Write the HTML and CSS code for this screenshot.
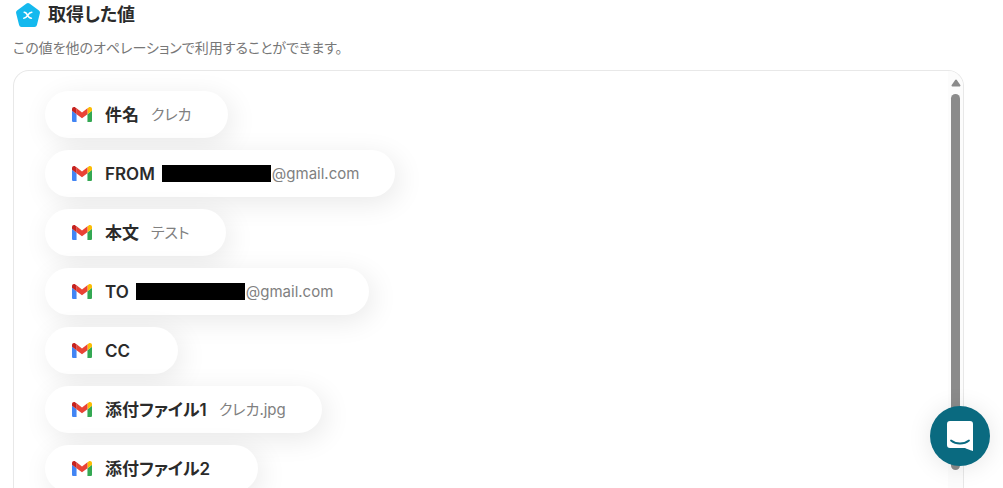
FILE: index.html
```html
<!DOCTYPE html>
<html lang="ja">
<head>
<meta charset="utf-8">
<title>取得した値</title>
<link rel="stylesheet" href="styles.css">
</head>
<body>
<svg width="0" height="0" class="defs" aria-hidden="true">
  <symbol id="gmail" viewBox="52 42 88 66">
    <path fill="#4285f4" d="M58 108h14V74L52 59v43c0 3.32 2.69 6 6 6"/>
    <path fill="#34a853" d="M120 108h14c3.32 0 6-2.69 6-6V59l-20 15"/>
    <path fill="#fbbc04" d="M120 48v26l20-15v-8c0-7.42-8.47-11.65-14.4-7.2"/>
    <path fill="#ea4335" d="M72 74V48l24 18 24-18v26L96 92"/>
    <path fill="#c5221f" d="M52 51v8l20 15V48l-5.6-4.2c-5.94-4.45-14.4-.22-14.4 7.2"/>
  </symbol>
</svg>
<main class="page">
  <h1 class="title">
    <svg class="title-icon" viewBox="0 0 26 26" aria-hidden="true">
      <path d="M13 3.500 22.500 10.400 19.500 22.500H6.500L3.500 10.400Z" fill="#14b9ee" stroke="#14b9ee" stroke-width="5" stroke-linejoin="round"/>
      <path d="M9.200 10.200c1.800 0 2.300.8 3.300 3s1.900 3 3.900 3M16.800 10.200c-1.800 0-2.700.9-4 3s-2 3-4 3" fill="none" stroke="#fff" stroke-width="1.600" stroke-linecap="round"/>
    </svg>
    取得した値
  </h1>
  <p class="lead">この値を他のオペレーションで利用することができます。</p>
  <section class="panel">
    <ul class="chips">
      <li class="chip"><svg class="gmail"><use href="#gmail"/></svg><span class="name">件名</span><span class="value">クレカ</span></li>
      <li class="chip"><svg class="gmail"><use href="#gmail"/></svg><span class="name">FROM</span><span class="value masked"><span class="mask"></span>@gmail.com</span></li>
      <li class="chip"><svg class="gmail"><use href="#gmail"/></svg><span class="name">本文</span><span class="value">テスト</span></li>
      <li class="chip"><svg class="gmail"><use href="#gmail"/></svg><span class="name">TO</span><span class="value masked"><span class="mask"></span>@gmail.com</span></li>
      <li class="chip"><svg class="gmail"><use href="#gmail"/></svg><span class="name">CC</span><span class="value"></span></li>
      <li class="chip"><svg class="gmail"><use href="#gmail"/></svg><span class="name">添付ファイル1</span><span class="value">クレカ.jpg</span></li>
      <li class="chip"><svg class="gmail"><use href="#gmail"/></svg><span class="name">添付ファイル2</span><span class="value"></span></li>
    </ul>
    <div class="track" aria-hidden="true">
      <svg class="arrow" viewBox="0 0 10 8"><path d="M5 1.500 8.500 6.500H1.500Z" fill="#8b8b8b" stroke="#8b8b8b" stroke-width="2" stroke-linejoin="round"/></svg>
      <div class="thumb"></div>
    </div>
  </section>
</main>
<button class="chat" type="button" aria-label="チャットを開く">
  <svg class="chat-icon" viewBox="0 0 28 32" aria-hidden="true">
    <path d="M4 1h20a3 3 0 0 1 3 3v27s-4-1-8-3H4a3 3 0 0 1-3-3V4a3 3 0 0 1 3-3Z" fill="#fff"/>
    <path d="M5 20.500c5 4 13 4 18 0" fill="none" stroke="#0a6a80" stroke-width="1.800" stroke-linecap="round"/>
  </svg>
</button>
</body>
</html>
```
FILE: styles.css
```css
* { box-sizing: border-box; }
body {
  margin: 0;
  height: 100vh;
  overflow: hidden;
  background: #fff;
  color: #2b2b2b;
  font-family: Inter, "Noto Sans CJK JP", sans-serif;
  font-feature-settings: "palt";
}
.defs { position: absolute; }
.page {
  display: flex;
  flex-direction: column;
  height: 100vh;
  padding: 0 39px 0 13px;
}
.title {
  display: flex;
  align-items: center;
  gap: 7px;
  height: 30px;
  margin: 0;
  padding-left: 2px;
  font-size: 18px;
  line-height: 24px;
  font-weight: 600;
}
.title-icon { width: 26px; height: 26px; }
.lead {
  margin: 8px 0 12px;
  font-size: 14px;
  line-height: 20px;
  color: #777;
}
.panel {
  flex: 1;
  display: flex;
  min-height: 0;
  border: 1px solid #e8e8e8;
  border-bottom: 0;
  border-radius: 16px 16px 0 0;
  overflow: hidden;
}
.chips {
  flex: 1;
  display: flex;
  flex-direction: column;
  align-items: flex-start;
  gap: 12px;
  margin: 0;
  padding: 20px 31px 0;
  list-style: none;
}
.chip {
  display: flex;
  flex-shrink: 0;
  align-items: center;
  height: 47px;
  padding: 0 36px 0 27px;
  border-radius: 24px;
  background: #fff;
  box-shadow: 4px 6px 28px rgba(0, 0, 0, 0.09);
}
.gmail { width: 20px; height: 15px; margin-right: 13px; }
.name { font-size: 17px; line-height: 24px; font-weight: 600; }
.value {
  display: flex;
  align-items: center;
  margin-left: 12px;
  font-size: 15px;
  line-height: 24px;
  color: #808080;
}
.masked { margin-left: 7px; }
.mask { width: 109px; height: 17px; margin-right: 1px; background: #000; }
.track {
  display: flex;
  flex-direction: column;
  align-items: center;
  width: 15px;
  padding: 8px 0 18px;
  background: #fcfcfc;
}
.arrow { width: 10px; height: 8px; margin-bottom: 7px; }
.thumb { flex: 1; width: 9px; border-radius: 5px; background: #8b8b8b; }
.chat {
  position: fixed;
  right: 13px;
  bottom: 22px;
  display: grid;
  place-items: center;
  width: 60px;
  height: 60px;
  padding: 0;
  border: 0;
  border-radius: 50%;
  background: #0a6a80;
  box-shadow: 0 2px 24px rgba(0, 0, 0, 0.1);
}
.chat-icon { width: 28px; height: 32px; }
```
